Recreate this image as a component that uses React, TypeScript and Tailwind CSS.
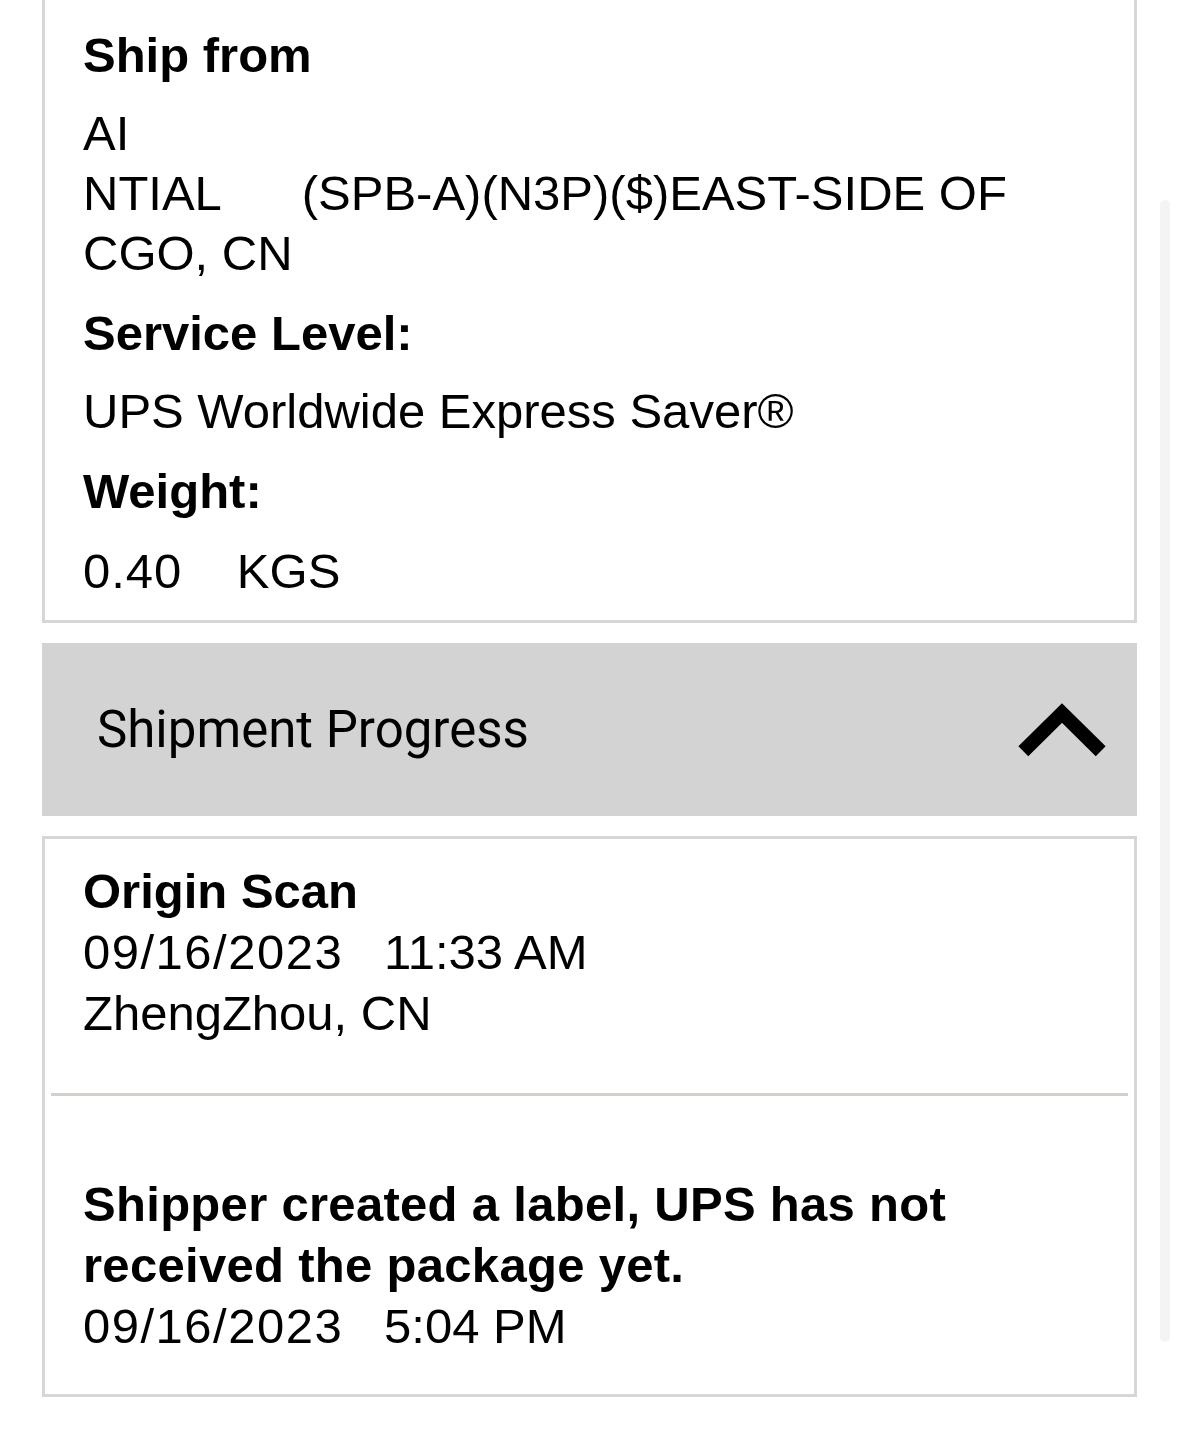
const body = "font-['Liberation_Sans',Arial,sans-serif] text-[49px] leading-[60px] text-black"

function ChevronUp() {
  return (
    <svg width="92" height="60" viewBox="0 0 92 60" className="block">
      <polyline
        points="7.3,51.3 46,13 84.7,51.3"
        fill="none"
        stroke="#000"
        strokeWidth="14"
        strokeLinecap="butt"
        strokeLinejoin="miter"
      />
    </svg>
  )
}

export default function App() {
  return (
    <div className="relative min-h-[1445px] w-full bg-white">
      <div className="px-[42px]">
        {/* shipment details card, top cut off */}
        <div className={`border-x-[3px] border-b-[3px] border-[#d6d6d6] pl-[38px] pt-[25px] pb-[19px] ${body}`}>
          <div className="font-bold">Ship from</div>
          <div className="mt-[18px] whitespace-pre">
            <div>AI</div>
            <div>{"NTIAL      (SPB-A)(N3P)($)EAST-SIDE OF"}</div>
            <div>CGO, CN</div>
          </div>
          <div className="mt-[20px] font-bold">Service Level:</div>
          <div className="mt-[18px]">UPS Worldwide Express Saver®</div>
          <div className="mt-[20px] font-bold">Weight:</div>
          <div className="mt-[20px] whitespace-pre">
            <span className="tracking-[1px]">0.40</span>
            {"    KGS"}
          </div>
        </div>

        {/* progress header */}
        <div className="mt-[20px] flex h-[173px] items-center justify-between bg-[#d3d3d3] pl-[55px] pr-[29px]">
          <span className="font-['Roboto',Arial,sans-serif] text-[51px] leading-none text-black">Shipment Progress</span>
          <ChevronUp />
        </div>

        {/* activity list */}
        <div className={`mt-[20px] border-[3px] border-[#d6d6d6] px-[6px] pt-[22px] pb-[37px] ${body} leading-[61px]`}>
          <div className="pl-[32px]">
            <div className="font-bold">Origin Scan</div>
            <div className="whitespace-pre">
              <span className="tracking-[1.5px]">09/16/2023</span>
              {"   11:33 AM"}
            </div>
            <div>ZhengZhou, CN</div>
          </div>
          <div className="mt-[49px] h-[3px] bg-[#d4cfca]" />
          <div className="mt-[78px] pl-[32px]">
            <div className="font-bold tracking-[0.3px]">Shipper created a label, UPS has not</div>
            <div className="font-bold tracking-[0.3px]">received the package yet.</div>
            <div className="whitespace-pre">
              <span className="tracking-[1.5px]">09/16/2023</span>
              {"   5:04 PM"}
            </div>
          </div>
        </div>
      </div>

      {/* scrollbar */}
      <div className="absolute left-[1160px] top-[200px] h-[1142px] w-[10px] rounded-full bg-[#f4f4f4]" />
    </div>
  )
}
